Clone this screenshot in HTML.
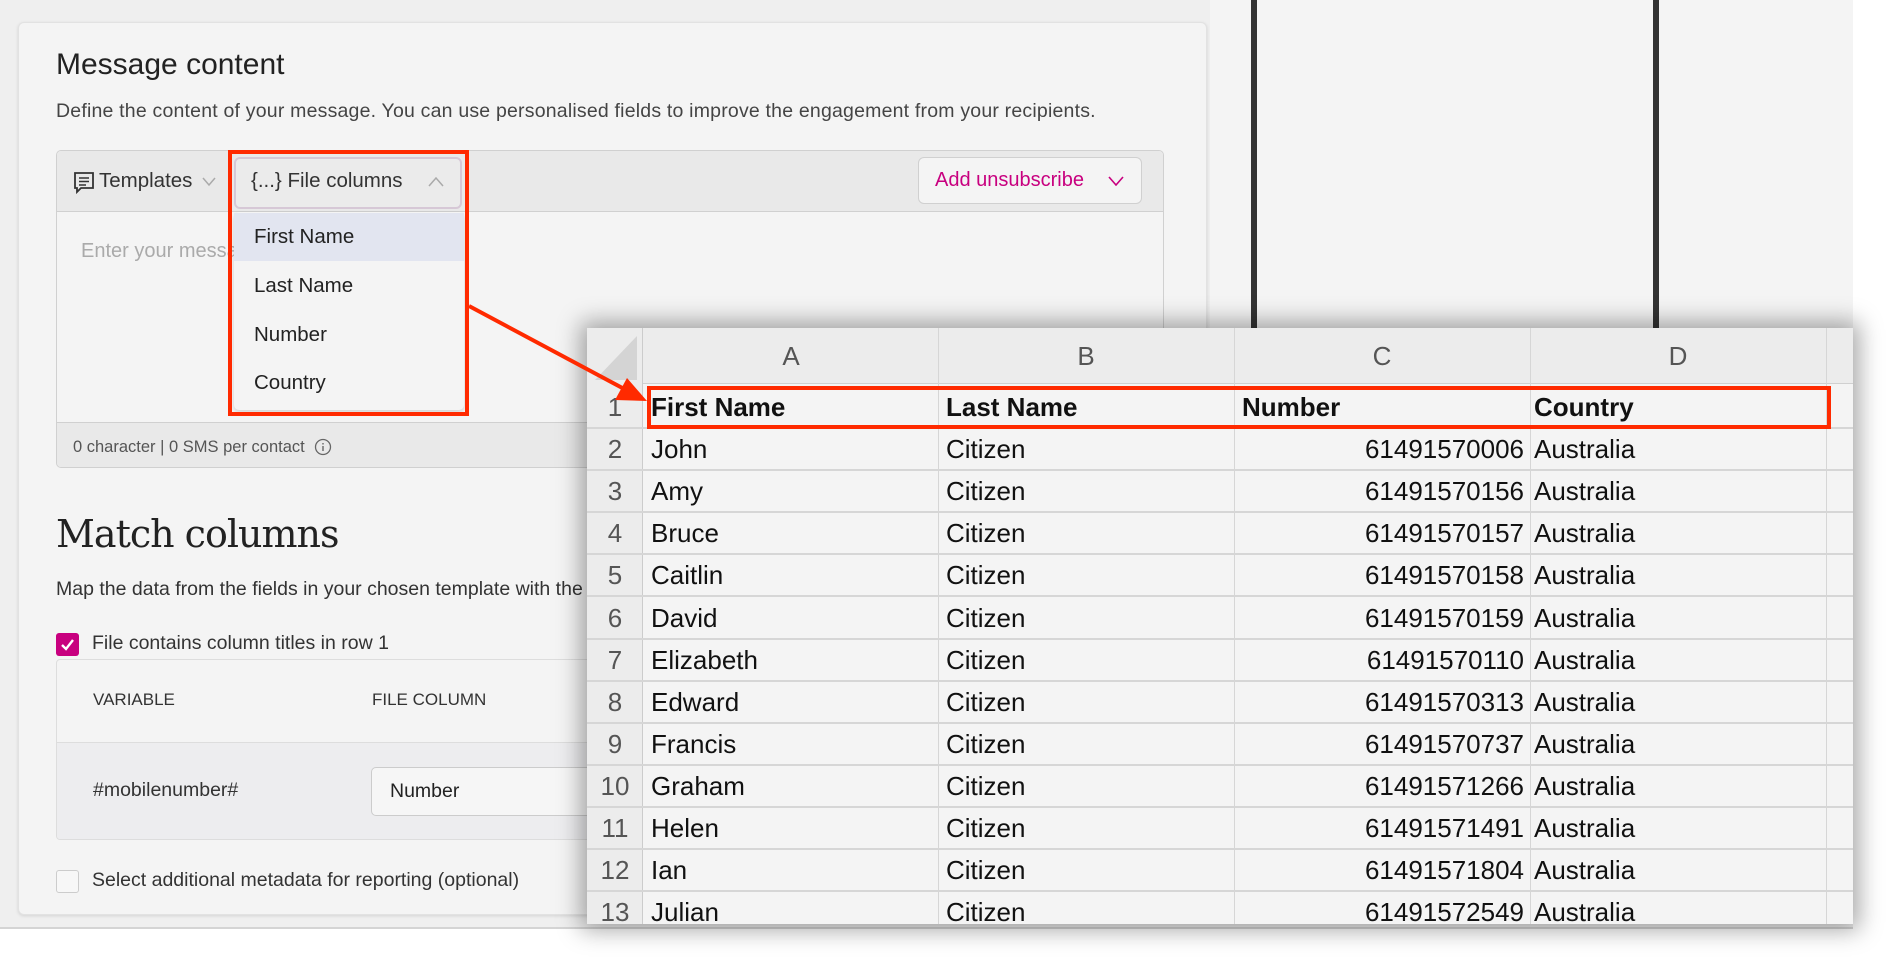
<!DOCTYPE html>
<html><head><meta charset="utf-8"><style>
*{margin:0;padding:0;box-sizing:border-box}
body{width:1892px;height:962px;position:relative;overflow:hidden;background:#fff;font-family:"Liberation Sans",sans-serif;color:#2b2b2b}
.a{position:absolute}
.t{position:absolute;white-space:nowrap}
.cell{position:absolute;white-space:nowrap;font-size:26px;color:#111;line-height:42px}
</style></head><body>
<div class="a" style="left:0;top:0;width:1853px;height:929px;background:#efefef;border-bottom:2px solid #d4d4d4"></div>
<div class="a" style="left:1210px;top:0;width:643px;height:330px;background:#f4f4f4"></div>
<div class="a" style="left:1251px;top:0;width:6px;height:330px;background:#333"></div>
<div class="a" style="left:1653px;top:0;width:6px;height:330px;background:#333"></div>
<!-- card -->
<div class="a" style="left:18px;top:22px;width:1189px;height:893px;background:#f4f4f4;border:1px solid #e2e2e2;border-radius:6px;box-shadow:0 1px 3px rgba(0,0,0,.12)"></div>
<div class="t" style="left:56px;top:48px;font-size:30px;color:#222">Message content</div>
<div class="t" style="left:56px;top:100px;font-size:19.5px;color:#444;letter-spacing:0.2px">Define the content of your message. You can use personalised fields to improve the engagement from your recipients.</div>
<!-- editor -->
<div class="a" style="left:56px;top:150px;width:1108px;height:318px;border:1px solid #d0d0d0;border-radius:5px;background:#f4f4f4;overflow:hidden">
 <div class="a" style="left:0;top:0;width:100%;height:61px;background:#e9e9e9;border-bottom:1px solid #d0d0d0"></div>
 <div class="a" style="left:0;top:271px;width:100%;height:47px;background:#e9e9e9;border-top:1px solid #d0d0d0"></div>
</div>
<svg class="a" style="left:73px;top:171px" width="22" height="24" viewBox="0 0 22 24"><path d="M2 2h18v15H8l-4 4v-4H2z" fill="none" stroke="#333" stroke-width="1.8"/><path d="M6 7h10M6 10.5h10M6 14h7" stroke="#333" stroke-width="1.6"/></svg>
<div class="t" style="left:99px;top:169px;font-size:20.5px;color:#333">Templates</div>
<svg class="a" style="left:202px;top:177px" width="14" height="10"><path d="M1 1l6 7 6-7" fill="none" stroke="#aaa" stroke-width="1.5"/></svg>
<div class="a" style="left:234px;top:157px;width:228px;height:52px;border:2px solid #d6c8d6;border-radius:6px;background:#ebebeb"></div>
<div class="t" style="left:251px;top:169px;font-size:20.5px;color:#333">{...} File columns</div>
<svg class="a" style="left:428px;top:177px" width="16" height="10"><path d="M1 9l7-8 7 8" fill="none" stroke="#aaa" stroke-width="1.5"/></svg>
<div class="a" style="left:918px;top:157px;width:224px;height:47px;border:1px solid #d0d0d0;border-radius:6px;background:#f4f4f4"></div>
<div class="t" style="left:935px;top:169px;font-size:20px;color:#c8007f">Add unsubscribe</div>
<svg class="a" style="left:1108px;top:176px" width="16" height="10"><path d="M1 1l7 8 7-8" fill="none" stroke="#c8007f" stroke-width="1.6"/></svg>
<div class="t" style="left:81px;top:240px;font-size:20px;color:#aaa">Enter your message</div>
<!-- dropdown -->
<div class="a" style="left:234px;top:212px;width:230px;height:198px;background:#f4f4f4;border-radius:5px;box-shadow:0 2px 4px rgba(0,0,0,.15)"></div>
<div class="a" style="left:234px;top:213px;width:230px;height:48px;background:#e2e5f0"></div>
<div class="t" style="left:254px;top:225px;font-size:20.5px;color:#222">First Name</div>
<div class="t" style="left:254px;top:274px;font-size:20.5px;color:#222">Last Name</div>
<div class="t" style="left:254px;top:323px;font-size:20.5px;color:#222">Number</div>
<div class="t" style="left:254px;top:371px;font-size:20.5px;color:#222">Country</div>
<div class="a" style="left:228px;top:150px;width:241px;height:266px;border:4px solid #ff2a00"></div>
<div class="t" style="left:73px;top:438px;font-size:16.5px;color:#555">0 character | 0 SMS per contact</div>
<svg class="a" style="left:314px;top:438px" width="18" height="18"><circle cx="9" cy="9" r="7.5" fill="none" stroke="#666" stroke-width="1.3"/><path d="M9 8v5M9 5v1.5" stroke="#666" stroke-width="1.4"/></svg>
<!-- match columns -->
<div class="t" style="left:56px;top:512px;font-size:38px;color:#222;font-family:'DejaVu Serif','Liberation Serif',serif;letter-spacing:-1px">Match columns</div>
<div class="t" style="left:56px;top:578px;font-size:19.5px;color:#333">Map the data from the fields in your chosen template with the columns in your file.</div>
<div class="a" style="left:56px;top:633px;width:23px;height:23px;background:#c8007f;border-radius:3px"></div>
<svg class="a" style="left:60px;top:637px" width="15" height="15"><path d="M2 8l4 4 7-9" fill="none" stroke="#fff" stroke-width="2.4"/></svg>
<div class="t" style="left:92px;top:632px;font-size:19.5px;color:#333">File contains column titles in row 1</div>
<div class="a" style="left:56px;top:659px;width:700px;height:181px;border:1px solid #ddd;border-radius:4px;background:#f4f4f4;overflow:hidden">
 <div class="a" style="left:0;top:82px;width:100%;height:103px;background:#ededef;border-top:1px solid #ddd"></div>
</div>
<div class="t" style="left:93px;top:690px;font-size:17px;color:#333">VARIABLE</div>
<div class="t" style="left:372px;top:690px;font-size:17px;color:#333">FILE COLUMN</div>
<div class="t" style="left:93px;top:779px;font-size:19.5px;color:#333">#mobilenumber#</div>
<div class="a" style="left:371px;top:767px;width:300px;height:49px;border:1px solid #ccc;border-radius:5px;background:#f6f6f6"></div>
<div class="t" style="left:390px;top:780px;font-size:19.5px;color:#222">Number</div>
<div class="a" style="left:56px;top:870px;width:23px;height:23px;border:1.5px solid #ccc;border-radius:3px;background:#f7f7f7"></div>
<div class="t" style="left:92px;top:869px;font-size:19.5px;color:#333">Select additional metadata for reporting (optional)</div>
<!-- spreadsheet -->
<div class="a" style="left:587px;top:328px;width:1266px;height:596px;background:#f4f4f4;box-shadow:0 0 22px 6px rgba(0,0,0,.35);overflow:hidden">
 <div class="a" style="left:0;top:0;width:100%;height:56px;background:#ececec;border-bottom:1px solid #d0d0d0"></div>
 <div class="a" style="left:0;top:0;width:56px;height:100%;background:#ececec;border-right:1px solid #ccc"></div>
 <svg class="a" style="left:6px;top:6px" width="46" height="46"><path d="M44 2v44H2z" fill="#d4d4d4"/></svg>
 <div id="grid"></div>
</div>
<div class="a" style="left:647px;top:386px;width:1184px;height:43px;border:4px solid #ff2a00"></div>
<!-- arrow -->
<svg class="a" style="left:0;top:0" width="700" height="450"><line x1="469" y1="306" x2="628" y2="391" stroke="#ff2a00" stroke-width="4"/><path d="M647 401l-32-1 12-22z" fill="#ff2a00"/></svg>
<script>
var g=document.getElementById('grid'),h='';
var cols=[56,351,647,943,1239];
for(var i=1;i<5;i++)h+='<div class="a" style="left:'+cols[i]+'px;top:0;width:1px;height:600px;background:#d6d6d6"></div>';
var L=['A','B','C','D'];
for(var i=0;i<4;i++)h+='<div class="cell" style="left:'+cols[i]+'px;width:296px;text-align:center;top:7px;color:#555">'+L[i]+'</div>';
var rows=[['First Name','Last Name','Number','Country'],['John','Citizen','61491570006','Australia'],['Amy','Citizen','61491570156','Australia'],['Bruce','Citizen','61491570157','Australia'],['Caitlin','Citizen','61491570158','Australia'],['David','Citizen','61491570159','Australia'],['Elizabeth','Citizen','61491570110','Australia'],['Edward','Citizen','61491570313','Australia'],['Francis','Citizen','61491570737','Australia'],['Graham','Citizen','61491571266','Australia'],['Helen','Citizen','61491571491','Australia'],['Ian','Citizen','61491571804','Australia'],['Julian','Citizen','61491572549','Australia']];
for(var r=0;r<rows.length;r++){var y=58+r*42.1;
h+='<div class="a" style="left:0;top:'+(y+41)+'px;width:100%;height:2px;background:#d6d6d6"></div>';
var b=r==0?'font-weight:bold;':'';
h+='<div class="cell" style="left:0;width:56px;text-align:center;top:'+y+'px;color:#555">'+(r+1)+'</div>';
h+='<div class="cell" style="'+b+'left:64px;top:'+y+'px">'+rows[r][0]+'</div>';
h+='<div class="cell" style="'+b+'left:359px;top:'+y+'px">'+rows[r][1]+'</div>';
if(r==0)h+='<div class="cell" style="'+b+'left:655px;top:'+y+'px">'+rows[r][2]+'</div>';
else h+='<div class="cell" style="left:647px;width:290px;text-align:right;top:'+y+'px">'+rows[r][2]+'</div>';
h+='<div class="cell" style="'+b+'left:947px;top:'+y+'px">'+rows[r][3]+'</div>';}
g.innerHTML=h;
</script>
</body></html>
